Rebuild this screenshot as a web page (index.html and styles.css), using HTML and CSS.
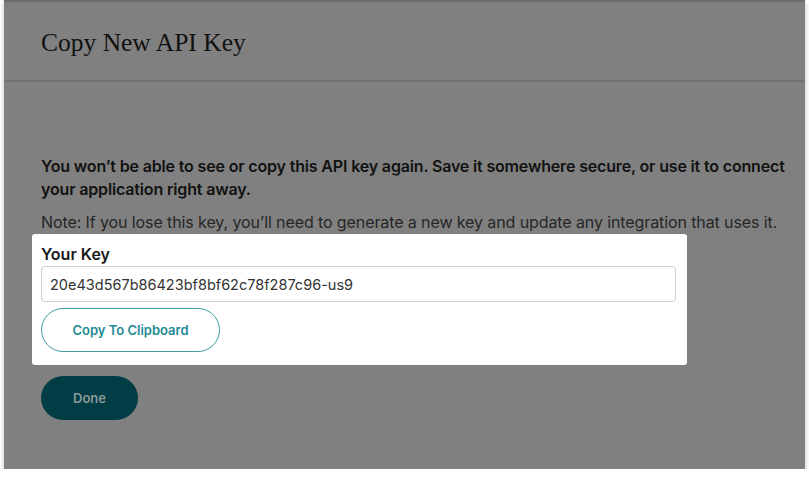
FILE: index.html
```html
<!DOCTYPE html>
<html>
<head>
<meta charset="utf-8">
<link rel="stylesheet" href="styles.css">
</head>
<body>
<div class="panel">
  <div class="header">
    <h1 class="title">Copy New API Key</h1>
  </div>
  <div class="content">
    <p class="warning">You won’t be able to see or copy this API key again. Save it somewhere secure, or use it to connect your application right away.</p>
    <p class="note">Note: If you lose this key, you’ll need to generate a new key and update any integration that uses it.</p>
    <div class="highlight">
      <label class="label">Your Key</label>
      <div class="keyfield">20e43d567b86423bf8bf62c78f287c96-us9</div>
      <button class="copy-btn">Copy To Clipboard</button>
    </div>
    <button class="done-btn">Done</button>
  </div>
</div>
</body>
</html>
```
FILE: styles.css
```css
html, body {
  margin: 0;
  padding: 0;
  background: #ffffff;
}
body {
  font-family: Inter, "Open Sans", Roboto, sans-serif;
}
.panel {
  margin-left: 4px;
  width: 801px;
  height: 467px;
  background: #808080;
  border-top: 2px solid #6c6c6c;
  box-shadow: 0 2px 5px rgba(0, 0, 0, 0.25);
}
.header {
  height: 78px;
  border-bottom: 2px solid #727272;
  display: flex;
  align-items: center;
  padding-left: 37px;
}
.title {
  margin: 0;
  font-family: "Liberation Serif", "DejaVu Serif", serif;
  font-weight: normal;
  font-size: 25.5px;
  color: #111111;
  padding-top: 4px;
}
.content {
  padding: 73px 0 0 37px;
}
.warning {
  margin: 0;
  width: 760px;
  font-size: 16px;
  font-weight: 600;
  line-height: 23px;
  color: #121212;
  letter-spacing: -0.16px;
}
.note {
  margin: 10px 0 0;
  font-size: 16px;
  font-weight: 400;
  line-height: 23px;
  color: #262626;
  letter-spacing: -0.1px;
}
.highlight {
  margin: 0 0 0 -9px;
  width: 655px;
  box-sizing: border-box;
  padding: 9px 9px 13px 9px;
  background: #ffffff;
  border-radius: 3px;
  display: flex;
  flex-direction: column;
  align-items: flex-start;
}
.label {
  font-size: 16px;
  font-weight: 600;
  line-height: 22px;
  color: #1a1a1a;
}
.keyfield {
  margin-top: 1px;
  box-sizing: border-box;
  width: 635px;
  height: 36px;
  border: 1px solid #cfcfcf;
  border-radius: 4px;
  padding: 0 8px;
  display: flex;
  align-items: center;
  font-size: 14.5px;
  color: #333333;
}
.copy-btn {
  margin-top: 6px;
  box-sizing: border-box;
  width: 179px;
  height: 44px;
  border: 1.5px solid #3e9ca4;
  border-radius: 22px;
  background: #ffffff;
  color: #1c8a93;
  font-family: Inter, "Open Sans", sans-serif;
  font-size: 13px;
  font-weight: 600;
}
.done-btn {
  margin-top: 11px;
  box-sizing: border-box;
  width: 97px;
  height: 44px;
  border: none;
  border-radius: 22px;
  background: #003d44;
  color: #8a9a9b;
  font-family: Inter, "Open Sans", sans-serif;
  font-size: 13px;
  font-weight: 600;
}
```
